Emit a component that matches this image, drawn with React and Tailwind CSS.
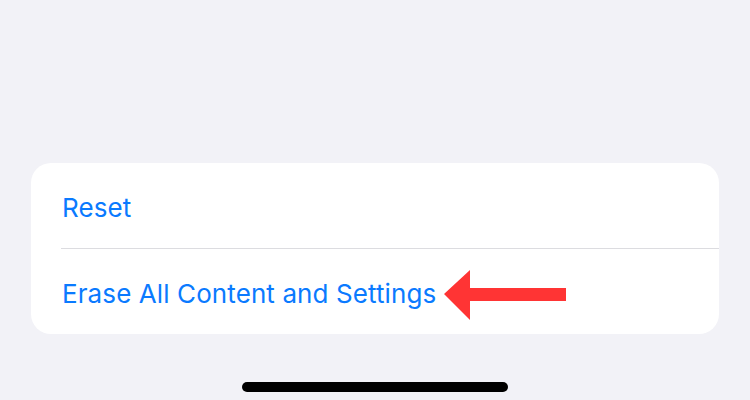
export default function App() {
  return (
    <div
      className="flex h-[400px] w-[750px] flex-col overflow-hidden bg-[#f2f2f7]"
      style={{ fontFamily: 'Inter, "Liberation Sans", sans-serif' }}
    >
      <div className="h-[163px] shrink-0" />
      <div className="relative mx-[31px] rounded-[20px] bg-white">
        <div className="flex h-[85px] items-center pl-[31px] pt-[4px]">
          <span className="text-[26px] leading-none tracking-[0.1px] text-[#0a7aff]">Reset</span>
        </div>
        <div className="ml-[30px] h-px bg-[#dcdce0]" />
        <div className="flex h-[85px] items-center pl-[31px] pt-[4px]">
          <span className="text-[26px] leading-none tracking-[0.1px] text-[#0a7aff]">
            Erase All Content and Settings
          </span>
        </div>
        <svg
          className="absolute left-[413px] top-[107px]"
          width="124"
          height="52"
          viewBox="0 0 124 52"
        >
          <polygon points="0,24 26,0 26,18 122,18 122,31 26,31 26,50" fill="#ff3434" />
        </svg>
      </div>
      <div className="flex flex-1 items-start justify-center pt-[48px]">
        <div className="h-[10px] w-[266px] rounded-full bg-black" />
      </div>
    </div>
  );
}
